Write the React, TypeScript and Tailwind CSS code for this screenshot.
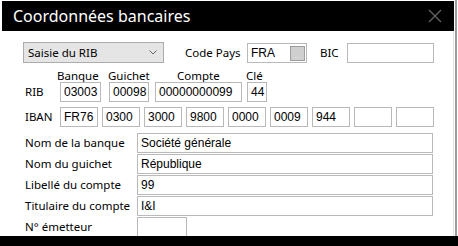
const box =
  "h-[20px] shrink-0 border border-[#b9b9b9] bg-white pl-[3px] font-['Liberation_Sans',Arial,sans-serif] text-[12px] leading-[18px] text-black whitespace-nowrap overflow-hidden";

function Field({ w, value }: { w: string; value?: string }) {
  return <div className={`${box} ${w}`}>{value}</div>;
}

const rows: { label: string; value: string; w: string }[] = [
  { label: "Nom de la banque", value: "Société générale", w: "w-[296px]" },
  { label: "Nom du guichet", value: "République", w: "w-[296px]" },
  { label: "Libellé du compte", value: "99", w: "w-[296px]" },
  { label: "Titulaire du compte", value: "I&I", w: "w-[296px]" },
  { label: "N° émetteur", value: "", w: "w-[50px]" },
];

const iban = ["FR76", "0300", "3000", "9800", "0000", "0009", "944", "", ""];

export default function App() {
  return (
    <div className="w-[458px] h-[246px] overflow-hidden bg-white font-['Noto_Sans',sans-serif] text-[11.5px] text-black">
      <div className="flex h-[236px]">
        <div className="w-[2px] shrink-0" />
        <div className="flex w-[452px] shrink-0 flex-col">
          {/* title bar */}
          <div className="mt-[1px] flex h-[30px] shrink-0 items-center justify-between bg-black pl-[11px] pr-[12px]">
            <span className="text-[16px] leading-none text-white">Coordonnées bancaires</span>
            <svg width="14" height="14" viewBox="0 0 14 14">
              <path d="M1 1 L13 13 M13 1 L1 13" stroke="#5f6361" strokeWidth="1.4" fill="none" />
            </svg>
          </div>

          <div className="flex-1 overflow-hidden border-r border-[#e3e3e3] pl-[21px] pt-[11px]">
            {/* saisie / code pays / bic */}
            <div className="flex h-[21px] items-end">
              <div className="flex h-[21px] w-[141px] items-center justify-between border border-[#acacac] bg-[#e5e5e5] pl-[4px] pr-[6px]">
                <span className="leading-none">Saisie du RIB</span>
                <svg width="8" height="5" viewBox="0 0 8 5">
                  <path d="M0.5 0.5 L4 4 L7.5 0.5" stroke="#666" strokeWidth="1" fill="none" />
                </svg>
              </div>
              <span className="ml-[21px] w-[62px] self-center leading-none">Code Pays</span>
              <div className={`${box} relative w-[60px]`}>
                FRA
                <div className="absolute right-[1px] top-[2px] flex h-[15px] w-[15px] items-end justify-center border border-[#9d9d9d] bg-[#cfcfcf] text-[7px] leading-[8px] text-[#eee]">
                  ...
                </div>
              </div>
              <span className="ml-[13px] w-[27px] self-center leading-none">BIC</span>
              <Field w="w-[87px]" />
            </div>

            {/* column labels */}
            <div className="mt-[6px] flex h-[13px] items-center leading-none">
              <span className="ml-[34px] w-[51px]">Banque</span>
              <span className="w-[69px]">Guichet</span>
              <span className="w-[69px]">Compte</span>
              <span>Clé</span>
            </div>

            {/* RIB */}
            <div className="flex items-center">
              <span className="ml-[2px] w-[35px] leading-none">RIB</span>
              <Field w="w-[41px]" value="03003" />
              <div className="ml-[8px]">
                <Field w="w-[40px]" value="00098" />
              </div>
              <div className="ml-[6px]">
                <Field w="w-[87px]" value="00000000099" />
              </div>
              <div className="ml-[5px]">
                <Field w="w-[20px]" value="44" />
              </div>
            </div>

            {/* IBAN */}
            <div className="mt-[5px] flex items-center">
              <span className="ml-[2px] w-[35px] leading-none">IBAN</span>
              <div className="flex gap-[4px]">
                {iban.map((v, i) => (
                  <Field key={i} w="w-[38px]" value={v} />
                ))}
              </div>
            </div>

            {/* details */}
            <div className="mt-[6px] flex flex-col gap-[1px]">
              {rows.map((r) => (
                <div key={r.label} className="flex items-center">
                  <span className="ml-[2px] w-[112px] leading-none">{r.label}</span>
                  <Field w={r.w} value={r.value} />
                </div>
              ))}
            </div>
          </div>
        </div>
        <div className="w-[1px] shrink-0" />
        <div className="w-[2px] shrink-0 bg-[#9c9c9c]" />
      </div>
      <div className="h-[10px] bg-black" />
    </div>
  );
}
